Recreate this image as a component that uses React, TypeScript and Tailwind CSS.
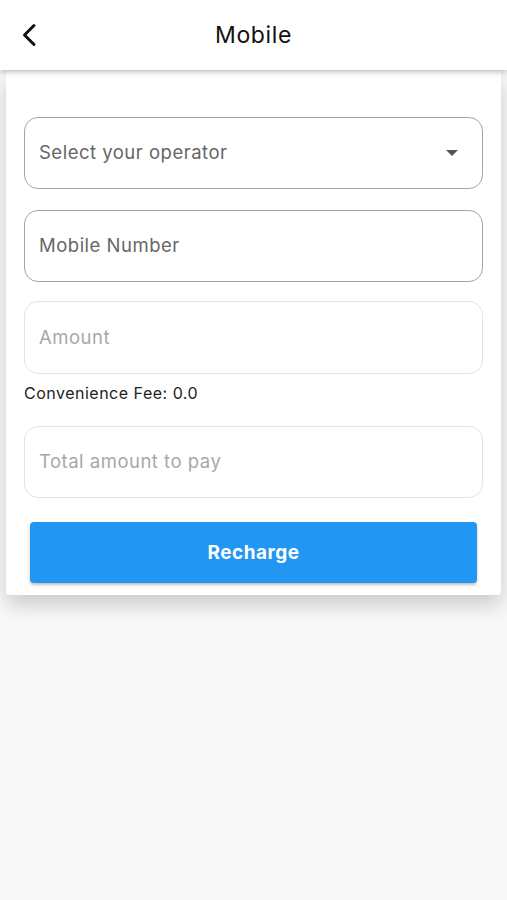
export default function App() {
  return (
    <div className="min-h-[900px] w-full bg-[#f8f8f8] font-['Inter','Liberation_Sans',sans-serif] tracking-[0.5px]">
      {/* Header */}
      <div className="relative z-10 h-[70px] bg-white shadow-[0_2px_6px_rgba(0,0,0,0.25)] flex items-center">
        <button className="w-[56px] h-full flex items-center justify-center pl-[2px]">
          <svg width="16" height="24" viewBox="0 0 16 24" fill="none">
            <path d="M13 2.5L3.5 12L13 21.5" stroke="#111" strokeWidth="3" strokeLinecap="round" strokeLinejoin="round" />
          </svg>
        </button>
        <div className="flex-1 text-center text-[23px] tracking-[0.6px] text-[#111] pr-[56px]">Mobile</div>
      </div>

      {/* Card */}
      <div className="mx-[6px] mt-px bg-white rounded-b-[3px] shadow-[0_10px_20px_rgba(0,0,0,0.18)] px-[18px] pt-[46px] pb-[12px]">
        <div className="flex flex-col">
          <div className="h-[72px] rounded-[14px] border border-[#a3a3a3] flex items-center justify-between pl-[14px] pr-[24px]">
            <span className="text-[18.5px] text-[#666]">Select your operator</span>
            <svg width="12" height="6" viewBox="0 0 12 6">
              <path d="M0 0H12L6 6Z" fill="#555" />
            </svg>
          </div>
          <div className="mt-[21px] h-[72px] rounded-[14px] border border-[#a3a3a3] flex items-center pl-[14px]">
            <span className="text-[18.5px] text-[#666]">Mobile Number</span>
          </div>
          <div className="mt-[19px] h-[73px] rounded-[14px] border border-[#e2e2e2] flex items-center pl-[14px]">
            <span className="text-[18.5px] text-[#a8a8a8]">Amount</span>
          </div>
          <div className="mt-[7px] text-[16px] text-[#222]">Convenience Fee: 0.0</div>
          <div className="mt-[21px] h-[72px] rounded-[14px] border border-[#e2e2e2] flex items-center pl-[14px]">
            <span className="text-[18.5px] text-[#a8a8a8]">Total amount to pay</span>
          </div>
          <button className="mt-[24px] mx-[6px] h-[61px] pt-[2px] rounded-[4px] bg-[#2196f3] shadow-[0_2px_3px_rgba(0,0,0,0.25)] text-white text-[19px] font-bold">
            Recharge
          </button>
        </div>
      </div>
    </div>
  );
}
